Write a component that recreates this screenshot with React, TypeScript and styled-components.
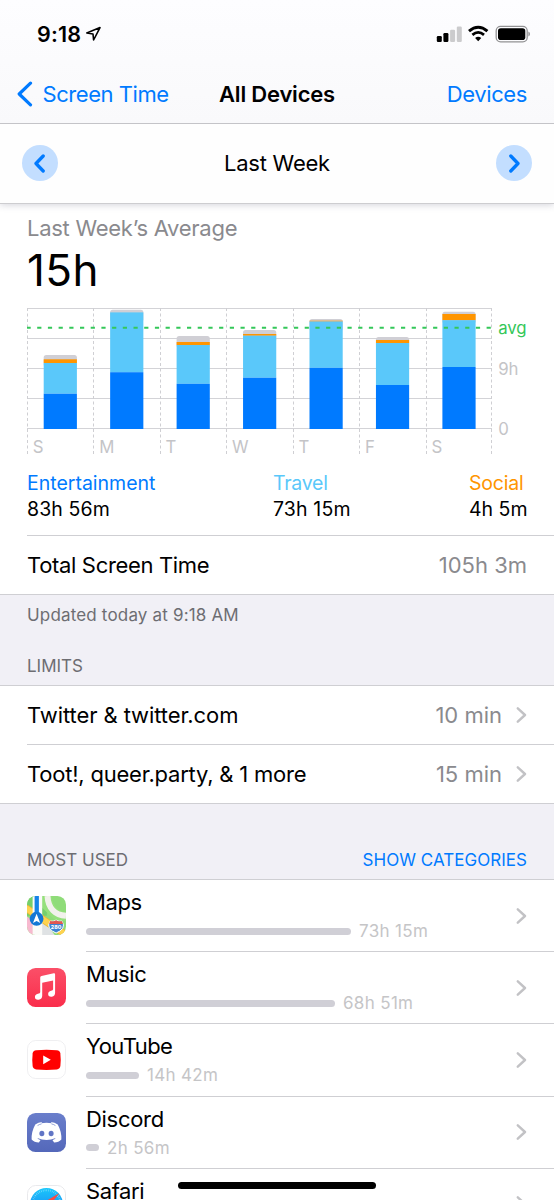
import React from "react";
import styled, { createGlobalStyle } from "styled-components";

const BLUE = "#007aff";
const SKY = "#5ac8fa";
const ORANGE = "#ff9500";
const GREEN = "#34c759";
const SEPARATOR = "#cfcfd3";
const SECONDARY = "#8a8a8e";
const FOOTNOTE = "#6d6d72";
const TERTIARY = "#c5c5c7";
const FONT = 'Inter, "Liberation Sans", sans-serif';

const GlobalStyle = createGlobalStyle`
  * { box-sizing: border-box; }
  html, body { margin: 0; padding: 0; background: #fff; }
  body { overflow: hidden; }
`;

const Screen = styled.div`
  position: relative;
  display: flex;
  flex-direction: column;
  width: 554px;
  height: 1200px;
  overflow: hidden;
  background: #fff;
  color: #000;
  font-family: ${FONT};
  font-size: 22px;
  white-space: nowrap;
  -webkit-font-smoothing: antialiased;
`;

const Text = styled.span<{ $size?: number; $track?: number; $color?: string; $weight?: number }>`
  font-size: ${(p) => p.$size ?? 22}px;
  letter-spacing: ${(p) => p.$track ?? 0}px;
  color: ${(p) => p.$color ?? "#000"};
  font-weight: ${(p) => p.$weight ?? 400};
`;

const Header = styled.header`
  position: relative;
  z-index: 2;
  flex: none;
  height: 124px;
  background: linear-gradient(#fdfdff, #f9f9fb);
  border-bottom: 1px solid #c4c4c8;
`;

const StatusBar = styled.div`
  display: flex;
  align-items: center;
  height: 64px;
  padding: 3px 24px 0 37px;
`;

const StatusIcons = styled.div`
  display: flex;
  align-items: center;
  margin-left: auto;
`;

const LocationArrow = styled.svg`
  margin-left: 4px;
`;

const NavBar = styled.nav`
  display: grid;
  grid-template-columns: 1fr auto 1fr;
  align-items: center;
  height: 60px;
  padding: 0 17px;
`;

const BackLink = styled.div`
  display: flex;
  align-items: center;
  gap: 9.5px;
`;

const NavAction = styled.div`
  padding-right: 10px;
  text-align: right;
`;

const WeekBar = styled.div`
  position: relative;
  z-index: 1;
  flex: none;
  display: flex;
  align-items: center;
  justify-content: space-between;
  height: 80px;
  padding: 0 22px 1px;
  background: #fefefe;
  border-bottom: 1px solid #cdcdd0;
  box-shadow: 0 1px 7px rgba(60, 60, 90, 0.22);
`;

const RoundButton = styled.button`
  display: flex;
  align-items: center;
  justify-content: center;
  width: 36px;
  height: 36px;
  padding: 0;
  border: 0;
  border-radius: 50%;
  background: #c3deff;
`;

const Summary = styled.section`
  flex: none;
  height: 331px;
  padding: 10px 0 0 27px;
`;

const AverageLabel = styled.div`
  height: 28px;
  line-height: 28px;
`;

const AverageValue = styled.div`
  height: 56px;
  line-height: 56px;
`;

const ChartSvg = styled.svg`
  display: block;
  margin-top: 5px;
`;

const Legend = styled.div`
  display: grid;
  grid-template-columns: 246px 196px auto;
  margin-top: 11.5px;
`;

const LegendItem = styled.div`
  display: flex;
  flex-direction: column;
  line-height: 26.5px;
`;

const List = styled.section`
  flex: none;
  background: #fff;
  border-bottom: 1px solid ${SEPARATOR};
`;

const Row = styled.div<{ $height: number; $divided?: boolean }>`
  display: flex;
  align-items: center;
  height: ${(p) => p.$height}px;
  margin-left: 27px;
  padding-right: 27px;
  border-top: ${(p) => (p.$divided ? `1px solid ${SEPARATOR}` : "0")};
`;

const RowValue = styled.div`
  display: flex;
  align-items: center;
  gap: 14px;
  margin-left: auto;
`;

const Gap = styled.div<{ $height: number }>`
  flex: none;
  display: flex;
  flex-direction: column;
  justify-content: space-between;
  height: ${(p) => p.$height}px;
  padding: 8px 27px 7px;
  background: #f1f0f6;
  border-bottom: 1px solid ${SEPARATOR};
  line-height: 24px;
`;

const GapLine = styled.div`
  display: flex;
  justify-content: space-between;
  margin-top: auto;
`;

const AppRow = styled.div`
  display: flex;
  flex: none;
  height: 72.22px;
  padding-left: 27px;
`;

const AppIcon = styled.svg`
  flex: none;
  width: 39px;
  height: 39px;
  margin-top: 16px;
`;

const AppBody = styled.div`
  display: flex;
  flex: 1;
  align-items: center;
  justify-content: space-between;
  margin-left: 20px;
  padding-right: 27px;
  border-bottom: 1px solid ${SEPARATOR};
`;

const AppInfo = styled.div`
  display: flex;
  flex-direction: column;
  height: 100%;
  padding-top: 6px;
`;

const AppName = styled.div`
  height: 32px;
  line-height: 32px;
`;

const Usage = styled.div`
  display: flex;
  align-items: center;
  gap: 8px;
  height: 26px;
`;

const UsageBar = styled.div`
  height: 7px;
  border-radius: 4px;
  background: #d0cfd6;
`;

const HomeIndicator = styled.div`
  position: absolute;
  z-index: 3;
  left: 178px;
  bottom: 11px;
  width: 198px;
  height: 7px;
  border-radius: 4px;
  background: #000;
`;

const Disclosure = () => (
  <svg width="11" height="16" viewBox="0 0 11 16" fill="none">
    <path d="M1.8 1.3 9 8l-7.2 6.7" stroke="#c2c2c5" strokeWidth="2.4" strokeLinecap="round" strokeLinejoin="round" />
  </svg>
);

const days = [
  { label: "S", other: 355, social: 359.3, travel: 363, fun: 393.7 },
  { label: "M", other: 309.7, social: 312.4, travel: 312.4, fun: 372.2 },
  { label: "T", other: 336, social: 342, travel: 345, fun: 383.8 },
  { label: "W", other: 330, social: 334, travel: 335.7, fun: 377.7 },
  { label: "T", other: 319, social: 320.7, travel: 321.5, fun: 367.8 },
  { label: "F", other: 337, social: 340, travel: 343, fun: 385 },
  { label: "S", other: 311.7, social: 314, travel: 320.2, fun: 367 },
];

const CHART_TOP = 303;
const COLUMN = 66.45;

const WeekChart = () => (
  <ChartSvg width="527" height="155" viewBox="0 0 527 155" fontFamily={FONT}>
    {[308.5, 338.5, 368.5, 398.5, 428.5].map((y) => (
      <line key={y} x1="0" x2="465" y1={y - CHART_TOP} y2={y - CHART_TOP} stroke="#d3d3d7" />
    ))}
    {Array.from({ length: 8 }, (_, i) => (
      <line
        key={i}
        x1={Math.round(i * COLUMN) + (i === 7 ? -0.5 : 0.5)}
        x2={Math.round(i * COLUMN) + (i === 7 ? -0.5 : 0.5)}
        y1="5"
        y2="153"
        stroke="#cfcfd3"
        strokeDasharray="3 2.5"
      />
    ))}
    {days.map((d, i) => {
      const x = i * COLUMN + 16.7;
      const band = (from: number, to: number, fill: string) => (
        <rect x={x} y={from - CHART_TOP} width="33.2" height={to - from} fill={fill} />
      );
      return (
        <g key={i}>
          <rect x={x} y={d.other - CHART_TOP} width="33.2" height="12" rx="2.5" fill="#d0cfd5" />
          {band(d.social, d.travel, ORANGE)}
          {band(d.travel, d.fun, SKY)}
          {band(d.fun, 429, BLUE)}
          <text x={i * COLUMN + 5.7} y="150.3" fontSize="16.8" fill="#c4c4c7">
            {d.label}
          </text>
        </g>
      );
    })}
    <line x1="0" x2="465" y1="24.8" y2="24.8" stroke={GREEN} strokeWidth="2" strokeDasharray="4.2 6.5" strokeDashoffset="0.5" />
    <text x="471.3" y="31.2" fontSize="16.8" letterSpacing="-0.2" fill={GREEN}>avg</text>
    <text x="471.3" y="71.5" fontSize="16.8" letterSpacing="-0.2" fill="#c4c4c7">9h</text>
    <text x="471.3" y="131.5" fontSize="16.8" fill="#c4c4c7">0</text>
  </ChartSvg>
);

const MapsIcon = () => (
  <AppIcon viewBox="0 0 118 118">
    <clipPath id="mapsClip"><rect width="118" height="118" rx="26" /></clipPath>
    <g clipPath="url(#mapsClip)">
      <rect width="118" height="118" fill="#8fdc79" />
      <path d="M0 0h60v60H0z" fill="#75cf6b" />
      <path d="M44 0h30c4 30 20 44 44 50v26L82 70 44 34z" fill="#95e07c" />
      <path d="M62 0c2 38 24 58 56 60" fill="none" stroke="#f2f1ec" strokeWidth="18" />
      <path d="M0 62l18 12v44H0z" fill="#f7b9cf" />
      <path d="M44 68l40 50H44z" fill="#dfe2e4" />
      <path d="M-4 36 122 120" stroke="#e9b93a" strokeWidth="22" />
      <path d="M-4 36 122 120" stroke="#ffd34f" strokeWidth="17" />
      <path d="M17 0h29v118H17z" fill="#fbfbf8" />
      <path d="M23 0h13v70H23z" fill="#1583e8" />
      <circle cx="29" cy="69" r="21" fill="#1477d4" />
      <path d="M29 54 40 82 29 76 18 82z" fill="#fff" />
      <path d="M70 76q9 2 18-3 9 5 18 3 8 12 2 22-7 9-20 14-13-5-20-14-6-10 2-22z" fill="#3b83d2" stroke="#fff" strokeWidth="3" />
      <path d="M70 76q9 2 18-3 9 5 18 3l3 9H67z" fill="#e2584f" />
      <text x="88" y="101" textAnchor="middle" fontSize="16" fontWeight="800" fill="#fff" fontFamily={FONT}>280</text>
    </g>
  </AppIcon>
);

const MusicIcon = () => (
  <AppIcon viewBox="0 0 118 118">
    <linearGradient id="musicFill" x2="0" y2="1">
      <stop stopColor="#fb4f68" />
      <stop offset="1" stopColor="#fa2d4b" />
    </linearGradient>
    <rect width="118" height="118" rx="26" fill="url(#musicFill)" />
    <path
      d="M40 29q0-4 4-5l37-8q4-1 4 4v55q0 11-10 12-11 1-11-8 0-8 9-10 6-1 6-5V38l-33 7v39q0 11-11 12-11 1-11-8 0-8 9-10 7-1 7-5z"
      fill="#fff"
    />
  </AppIcon>
);

const YouTubeIcon = () => (
  <AppIcon viewBox="0 0 118 118">
    <rect x="1.5" y="1.5" width="115" height="115" rx="25" fill="#fff" stroke="#efeff1" strokeWidth="3" />
    <path d="M28 31q31-3 62 0 10 1 11 10 2 19 0 38-1 9-11 10-31 3-62 0-10-1-11-10-2-19 0-38 1-9 11-10z" fill="#f00" />
    <path d="M49 47v26l23-13z" fill="#fff" />
  </AppIcon>
);

const DiscordIcon = () => (
  <AppIcon viewBox="0 0 118 118">
    <linearGradient id="discordFill" x2="0" y2="1">
      <stop stopColor="#6a7ecb" />
      <stop offset="1" stopColor="#5468ba" />
    </linearGradient>
    <rect width="118" height="118" rx="26" fill="url(#discordFill)" />
    <path
      d="M46 27q-12 1-21 8Q13 57 14 80q8 9 22 9l5-7q-7-2-10-6 28 12 56 0-3 4-10 6l5 7q14 0 22-9 1-23-11-45-9-7-21-8l3 4q-16-3-32 0z"
      fill="#fff"
    />
    <path d="M32 38q6-4 12-5M86 38q-6-4-12-5" fill="none" stroke="#6175c5" strokeWidth="2" />
    <ellipse cx="45" cy="62" rx="7.5" ry="8" fill="#6175c5" />
    <ellipse cx="73" cy="62" rx="7.5" ry="8" fill="#6175c5" />
  </AppIcon>
);

const SafariIcon = () => (
  <AppIcon viewBox="0 0 118 118">
    <linearGradient id="safariFill" x2="0" y2="1">
      <stop stopColor="#19c8fb" />
      <stop offset="1" stopColor="#1d70f1" />
    </linearGradient>
    <rect x="1.5" y="1.5" width="115" height="115" rx="25" fill="#fff" stroke="#e9e9ec" strokeWidth="3" />
    <circle cx="59" cy="59" r="50" fill="url(#safariFill)" />
    <circle cx="59" cy="59" r="43" fill="none" stroke="#fff" strokeOpacity=".6" strokeWidth="6" strokeDasharray="1.3 4.3" />
    <path d="M98 24 66 66 52 52z" fill="#ff4b42" />
    <path d="M20 94 66 66 52 52z" fill="#f4f4f4" />
  </AppIcon>
);

interface AppUsage {
  name: string;
  icon: React.ReactNode;
  track: number;
  bar?: number;
  time?: string;
}

const apps: AppUsage[] = [
  { name: "Maps", icon: <MapsIcon />, bar: 265, time: "73h 15m", track: -0.4 },
  { name: "Music", icon: <MusicIcon />, bar: 249, time: "68h 51m", track: -0.4 },
  { name: "YouTube", icon: <YouTubeIcon />, bar: 53, time: "14h 42m", track: -0.55 },
  { name: "Discord", icon: <DiscordIcon />, bar: 13, time: "2h 56m", track: -0.3 },
  { name: "Safari", icon: <SafariIcon />, track: -0.4 },
];

export default function App() {
  return (
    <Screen>
      <GlobalStyle />
      <Header>
        <StatusBar>
          <Text $size={21.5} $weight={600} $track={0.2}>9:18</Text>
          <LocationArrow width="16" height="16" viewBox="0 0 16 16">
            <path d="M15 1.6 1.8 7l6.2 1 .6 6z" fill="none" stroke="#000" strokeWidth="1.6" strokeLinejoin="round" />
          </LocationArrow>
          <StatusIcons>
            <svg width="94" height="18" viewBox="0 0 94 18">
              <rect x="0.8" y="11" width="5" height="6" rx="1.2" />
              <rect x="7.4" y="8" width="5" height="9" rx="1.2" />
              <rect x="14.1" y="4.8" width="5" height="12.2" rx="1.2" fill="#cbcbcd" />
              <rect x="20.8" y="1.5" width="5" height="15.5" rx="1.2" fill="#cbcbcd" />
              <path d="M33 6.1q9.2-7.8 18.4 0" fill="none" stroke="#000" strokeWidth="3" />
              <path d="M36.4 9.8q5.8-4.8 11.6 0" fill="none" stroke="#000" strokeWidth="2.8" />
              <path d="M39.1 13q3.1-2.5 6.2 0l-3.1 3.3z" />
              <rect x="60.2" y="1.4" width="31" height="15.4" rx="4.4" fill="none" stroke="#929294" strokeWidth="1.3" />
              <rect x="62" y="3.2" width="27.3" height="11.8" rx="2.8" />
              <path d="M92.4 6.6q1.6.8 1.6 2.5t-1.6 2.5z" fill="#929294" />
            </svg>
          </StatusIcons>
        </StatusBar>
        <NavBar>
          <BackLink>
            <svg width="16" height="26" viewBox="0 0 16 26" fill="none">
              <path d="M13.5 2.2 2.2 13l11.3 10.8" stroke={BLUE} strokeWidth="3.2" strokeLinecap="round" strokeLinejoin="round" />
            </svg>
            <Text $color={BLUE} $track={-0.45}>Screen Time</Text>
          </BackLink>
          <Text $weight={600} $track={-0.2}>All Devices</Text>
          <NavAction>
            <Text $color={BLUE} $track={-0.4}>Devices</Text>
          </NavAction>
        </NavBar>
      </Header>

      <WeekBar>
        <RoundButton aria-label="Previous week">
          <svg width="12" height="19" viewBox="0 0 12 19" fill="none">
            <path d="M9.2 2 2 9.5 9.2 17" stroke={BLUE} strokeWidth="3.3" strokeLinecap="round" strokeLinejoin="round" />
          </svg>
        </RoundButton>
        <Text $track={-0.25}>Last Week</Text>
        <RoundButton aria-label="Next week">
          <svg width="12" height="19" viewBox="0 0 12 19" fill="none">
            <path d="M2.8 2 10 9.5 2.8 17" stroke={BLUE} strokeWidth="3.3" strokeLinecap="round" strokeLinejoin="round" />
          </svg>
        </RoundButton>
      </WeekBar>

      <Summary>
        <AverageLabel><Text $color={SECONDARY} $track={-0.27}>Last Week’s Average</Text></AverageLabel>
        <AverageValue><Text $size={44} $track={0.4}>15h</Text></AverageValue>
        <WeekChart />
        <Legend>
          <LegendItem>
            <Text $size={19.5} $color={BLUE}>Entertainment</Text>
            <Text $size={19.5} $track={0.1}>83h 56m</Text>
          </LegendItem>
          <LegendItem>
            <Text $size={19.5} $color={SKY} $track={-0.25}>Travel</Text>
            <Text $size={19.5} $track={0.15}>73h 15m</Text>
          </LegendItem>
          <LegendItem>
            <Text $size={19.5} $color={ORANGE} $track={-0.2}>Social</Text>
            <Text $size={19.5}>4h 5m</Text>
          </LegendItem>
        </Legend>
      </Summary>

      <List>
        <Row $height={59} $divided>
          <Text $track={-0.33}>Total Screen Time</Text>
          <RowValue><Text $color={SECONDARY}>105h 3m</Text></RowValue>
        </Row>
      </List>

      <Gap $height={91}>
        <Text $size={17} $color={FOOTNOTE} $track={0.17}>Updated today at 9:18 AM</Text>
        <Text $size={17} $color={FOOTNOTE}>LIMITS</Text>
      </Gap>

      <List>
        <Row $height={58}>
          <Text $track={-0.08}>Twitter &amp; twitter.com</Text>
          <RowValue><Text $color={SECONDARY}>10 min</Text><Disclosure /></RowValue>
        </Row>
        <Row $height={59} $divided>
          <Text $track={-0.21}>Toot!, queer.party, &amp; 1 more</Text>
          <RowValue><Text $color={SECONDARY}>15 min</Text><Disclosure /></RowValue>
        </Row>
      </List>

      <Gap $height={76}>
        <GapLine>
          <Text $size={17} $color={FOOTNOTE}>MOST USED</Text>
          <Text $size={17} $color={BLUE} $track={0.03}>SHOW CATEGORIES</Text>
        </GapLine>
      </Gap>

      {apps.map((app) => (
        <AppRow key={app.name}>
          {app.icon}
          <AppBody>
            <AppInfo>
              <AppName><Text $track={app.track}>{app.name}</Text></AppName>
              {app.time && (
                <Usage>
                  <UsageBar style={{ width: app.bar }} />
                  <Text $size={17} $color={TERTIARY} $track={0.33}>{app.time}</Text>
                </Usage>
              )}
            </AppInfo>
            <Disclosure />
          </AppBody>
        </AppRow>
      ))}
      <HomeIndicator />
    </Screen>
  );
}
